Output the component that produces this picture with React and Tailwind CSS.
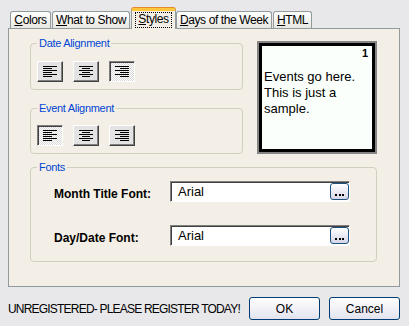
import React from "react";

const tabs = [
  { key: "C", rest: "olors", w: "w-[41px]" },
  { key: "W", rest: "hat to Show", w: "w-[78px]" },
  { key: "S", rest: "tyles", w: "w-[45px]", active: true },
  { key: "D", rest: "ays of the Week", w: "w-[96px]" },
  { key: "H", rest: "TML", w: "w-[39px]" },
];

function Tab({ tab }) {
  if (tab.active) {
    return (
      <div
        className={`${tab.w} relative z-10 -mb-px h-[21px] border-x border-[#919b9c] border-t-[3px] border-t-[#ffc83c] rounded-t-[3px] shadow-[0_-1px_0_#e68b2c] bg-[#f4efe6] flex items-start justify-center pt-[1px]`}
      >
        <span className="border border-dotted border-black px-[2px] leading-[13px] pb-[1px]">
          <span className="underline">{tab.key}</span>
          {tab.rest}
        </span>
      </div>
    );
  }
  return (
    <div
      className={`${tab.w} h-[17px] border border-b-0 border-[#919b9c] rounded-t-[3px] bg-linear-to-b from-white to-[#e8e7e1] flex items-center justify-center leading-[15px]`}
    >
      <span>
        <span className="underline">{tab.key}</span>
        {tab.rest}
      </span>
    </div>
  );
}

function AlignIcon({ align }) {
  const widths =
    align === "center" ? [14, 8, 14, 8, 14, 8] : [14, 9, 14, 9, 14, 9];
  return (
    <svg width="14" height="11" viewBox="0 0 14 11" shapeRendering="crispEdges">
      {widths.map((w, i) => {
        const x = align === "left" ? 0 : align === "center" ? (14 - w) / 2 : 14 - w;
        return <rect key={i} x={x} y={i * 2} width={w} height="1" fill="#000" />;
      })}
    </svg>
  );
}

function AlignButton({ align, pressed }) {
  const look = pressed
    ? "border-t-[#808080] border-l-[#808080] border-b-white border-r-white shadow-[inset_1px_1px_0_#404040] bg-[length:2px_2px] bg-[conic-gradient(#ffffff_25%,#d8d8d8_0_50%,#ffffff_0_75%,#d8d8d8_0)]"
    : "border-t-white border-l-white border-b-[#404040] border-r-[#404040] shadow-[inset_-1px_-1px_0_#808080] bg-[#e3e3e3]";
  return (
    <div className={`w-[26px] h-[21px] border flex items-center justify-center ${look}`}>
      <AlignIcon align={align} />
    </div>
  );
}

function Group({ title, className, children }) {
  return (
    <fieldset className={`border border-[#d0d0bf] rounded-[4px] pl-[6px] ${className}`}>
      <legend className="px-[2px] text-[11px] leading-[14px] tracking-[-0.3px] text-[#0046d5]">
        {title}
      </legend>
      {children}
    </fieldset>
  );
}

function FontField({ label, value, className }) {
  return (
    <div className={`flex items-center ml-[17px] h-[21px] ${className}`}>
      <div className="w-[116px] mt-[4px] text-[12px] font-bold text-black">{label}</div>
      <div className="w-[180px] h-[21px] flex border border-t-[#808080] border-l-[#808080] border-b-white border-r-white shadow-[inset_1px_1px_0_#404040] bg-white">
        <div className="flex-1 pl-[7px] pt-[2px] text-[13px] leading-[16px] text-black">
          {value}
        </div>
        <div className="w-[19px] h-[17px] mt-[1px] rounded-[3px] border border-[#1c5180] bg-linear-to-b from-white to-[#d6d6e8] flex items-end justify-center pb-[3px]">
          <svg width="9" height="2" viewBox="0 0 9 2" shapeRendering="crispEdges">
            <rect x="0" y="0" width="2" height="2" fill="#000" />
            <rect x="3.5" y="0" width="2" height="2" fill="#000" />
            <rect x="7" y="0" width="2" height="2" fill="#000" />
          </svg>
        </div>
      </div>
    </div>
  );
}

export default function App() {
  return (
    <div className="w-[409px] h-[326px] bg-[#e8e8eb] font-['Liberation_Sans',Arial,sans-serif] text-[12px] text-black overflow-hidden">
      <div className="flex items-end h-[28px] pl-[10px] tracking-[-0.4px]">
        <Tab tab={tabs[0]} />
        <div className="ml-[1px]">
          <Tab tab={tabs[1]} />
        </div>
        <div className="ml-[1px]">
          <Tab tab={tabs[2]} />
        </div>
        <Tab tab={tabs[3]} />
        <div className="ml-[1px]">
          <Tab tab={tabs[4]} />
        </div>
      </div>

      <div className="ml-[8px] w-[392px] h-[259px] border border-[#919b9c] bg-[#f4efe6] pl-[21px] pt-[7px]">
        <div className="flex">
          <div className="w-[213px] flex flex-col">
            <Group title="Date Alignment" className="h-[54px] pt-[11px]">
              <div className="flex gap-[10px]">
                <AlignButton align="left" />
                <AlignButton align="center" />
                <AlignButton align="right" pressed />
              </div>
            </Group>
            <Group title="Event Alignment" className="h-[53px] pt-[10px] mt-[11px]">
              <div className="flex gap-[10px]">
                <AlignButton align="left" pressed />
                <AlignButton align="center" />
                <AlignButton align="right" />
              </div>
            </Group>
          </div>

          <div className="ml-[14px] mt-[5px] w-[120px] h-[113px] border-2 border-[#858585]">
            <div className="w-full h-full border-[3px] border-black bg-[#fbfffb] pl-[2px] pr-[4px] pt-[1px]">
              <div className="text-right text-[11px] font-bold leading-[13px]">1</div>
              <div className="mt-[9px] text-[13px] leading-[16px]">
                Events go here.
                <br />
                This is just a
                <br />
                sample.
              </div>
            </div>
          </div>
        </div>

        <Group title="Fonts" className="w-[347px] h-[102px] mt-[6px] pl-[5px] pt-[7px]">
          <FontField label="Month Title Font:" value="Arial" />
          <FontField label="Day/Date Font:" value="Arial" className="mt-[23px]" />
        </Group>
      </div>

      <div className="flex items-center mt-[10px] pl-[8px]">
        <div className="w-[241px] text-[12px] tracking-[-0.8px] leading-[14px] text-black">
          UNREGISTERED- PLEASE REGISTER TODAY!
        </div>
        <button className="w-[71px] h-[23px] rounded-[3px] border border-[#003c74] bg-linear-to-b from-white to-[#e3e3ef] text-[12px] text-black">
          OK
        </button>
        <button className="ml-[9px] w-[71px] h-[23px] rounded-[3px] border border-[#003c74] bg-linear-to-b from-white to-[#e3e3ef] text-[12px] text-black">
          Cancel
        </button>
      </div>
    </div>
  );
}
